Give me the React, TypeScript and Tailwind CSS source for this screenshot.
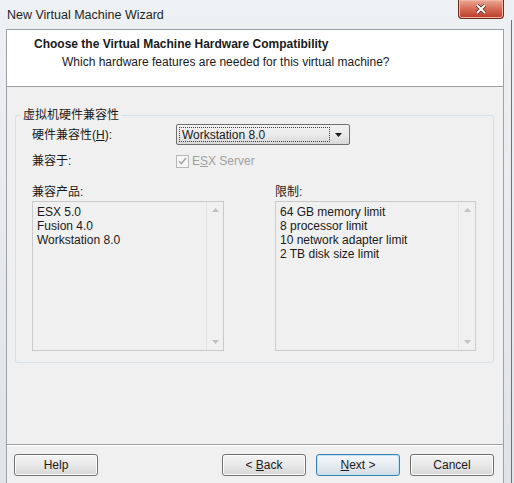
const PRODUCTS = ["ESX 5.0", "Fusion 4.0", "Workstation 8.0"];

const LIMITS = [
  "64 GB memory limit",
  "8 processor limit",
  "10 network adapter limit",
  "2 TB disk size limit",
];

function ListBox({ items, width }: { items: string[]; width: string }) {
  return (
    <div className={`flex h-[150px] border border-[#cacaca] bg-[#f0f0f0] ${width}`}>
      <div className="flex-1 px-[4px] pt-[3px] leading-[14px] text-[#1a1a1a]">
        {items.map((item) => (
          <div key={item}>{item}</div>
        ))}
      </div>
      <div className="flex w-[17px] flex-col items-center justify-between border-l border-[#e4e4e4] py-[6px]">
        <svg viewBox="0 0 7 4" className="h-[4px] w-[7px]">
          <path d="M0 4 3.5 0 7 4Z" fill="#c2c2c2" />
        </svg>
        <svg viewBox="0 0 7 4" className="h-[4px] w-[7px]">
          <path d="M0 0 3.5 4 7 0Z" fill="#c2c2c2" />
        </svg>
      </div>
    </div>
  );
}

function Button({
  children,
  focused = false,
}: {
  children: React.ReactNode;
  focused?: boolean;
}) {
  return (
    <button
      className={`h-[22px] w-[84px] rounded-[3px] border text-[12px] text-[#1a1a1a] ${
        focused
          ? "border-[#3c7fb1] bg-gradient-to-b from-[#f4f8fb] via-[#e6edf2] to-[#d4dde4] shadow-[inset_0_0_0_1px_#bfe3f7]"
          : "border-[#707070] bg-gradient-to-b from-[#f4f4f4] via-[#e8e8e8] to-[#d6d6d6] shadow-[inset_0_0_0_1px_#fcfcfc]"
      }`}
    >
      {children}
    </button>
  );
}

export default function App() {
  return (
    <div className="relative h-[483px] w-[514px] overflow-hidden bg-gradient-to-b from-[#eef1f4] to-[#dfe4e9] font-['Liberation_Sans','Noto_Sans_CJK_SC',sans-serif] text-[12px]">
      {/* title bar */}
      <div className="flex h-[29px] items-center pl-[7px] pt-[2px] text-[12.5px] text-[#1e1e1e]">
        New Virtual Machine Wizard
      </div>
      <div className="absolute right-[10px] top-0 flex h-[19px] w-[46px] items-center justify-center rounded-b-[4px] border border-t-0 border-[#6b2b1f] bg-gradient-to-b from-[#e9a997] via-[#d56b55] to-[#b83a27] shadow-[inset_0_0_0_1px_#f1b5a5]">
        <svg viewBox="0 0 12 10" className="h-[10px] w-[12px]">
          <path
            d="M2 1 6 5 10 1M2 9 6 5 10 9"
            stroke="#4a2018"
            strokeWidth={3.4}
            fill="none"
          />
          <path
            d="M2 1 6 5 10 1M2 9 6 5 10 9"
            stroke="#ffffff"
            strokeWidth={2}
            fill="none"
          />
        </svg>
      </div>
      <div className="absolute right-[2px] top-[20px] bottom-0 w-px bg-[#6f7378]" />

      {/* client area */}
      <div className="ml-[6px] h-[460px] w-[498px] border border-[#9aa1a8] bg-[#f0f0f0]">
        <div className="h-[57px] border-b border-[#a0a0a0] bg-white pl-[27px] pt-[6px]">
          <div className="font-bold leading-[16px] text-[#1a1a1a]">
            Choose the Virtual Machine Hardware Compatibility
          </div>
          <div className="mt-[2px] pl-[28px] leading-[16px] text-[#1a1a1a]">
            Which hardware features are needed for this virtual machine?
          </div>
        </div>

        <fieldset className="ml-[8px] mt-[20px] h-[256px] w-[479px] rounded-[3px] border border-[#d5dfe5] pl-[16px] pt-[1px]">
          <legend className="-ml-[11px] px-[2px] leading-[16px] text-[#1a1a1a]">
            虚拟机硬件兼容性
          </legend>
          <div className="flex items-center">
            <div className="w-[144px] text-[#1a1a1a]">
              硬件兼容性(<span className="underline">H</span>):
            </div>
            <div className="flex h-[21px] w-[174px] items-center rounded-[2px] border border-[#707070] bg-gradient-to-b from-[#f2f2f2] via-[#ebebeb] to-[#d8d8d8] p-[2px]">
              <div className="flex h-full flex-1 items-center border border-dotted border-[#404040] pl-[2px] text-[#1a1a1a]">
                Workstation 8.0
              </div>
              <svg viewBox="0 0 7 4" className="mx-[5px] h-[4px] w-[7px]">
                <path d="M0 0 3.5 4 7 0Z" fill="#1a1a1a" />
              </svg>
            </div>
          </div>
          <div className="mt-[7px] flex items-center">
            <div className="w-[144px] text-[#1a1a1a]">兼容于:</div>
            <div className="flex h-[13px] w-[13px] items-center justify-center border border-[#b8b8b8] bg-[#f6f6f6]">
              <svg viewBox="0 0 9 8" className="h-[8px] w-[9px]">
                <path
                  d="M1 4.2 3.4 6.6 8 1"
                  stroke="#a8a8a8"
                  strokeWidth={1.6}
                  fill="none"
                />
              </svg>
            </div>
            <div className="ml-[3px] text-[#a0a0a0]">
              E<span className="underline">S</span>X Server
            </div>
          </div>
          <div className="mt-[14px] flex">
            <div className="w-[243px]">
              <div className="leading-[16px] text-[#1a1a1a]">兼容产品:</div>
              <div className="mt-[1px]">
                <ListBox items={PRODUCTS} width="w-[192px]" />
              </div>
            </div>
            <div>
              <div className="leading-[16px] text-[#1a1a1a]">限制:</div>
              <div className="mt-[1px]">
                <ListBox items={LIMITS} width="w-[201px]" />
              </div>
            </div>
          </div>
        </fieldset>

        <div className="mt-[81px] border-t border-[#a0a0a0] shadow-[0_1px_0_#ffffff]" />
        <div className="flex pl-[7px] pr-[9px] pt-[9px]">
          <Button>Help</Button>
          <div className="ml-auto flex gap-[10px]">
            <Button>
              &lt; <span className="underline">B</span>ack
            </Button>
            <Button focused>
              <span className="underline">N</span>ext &gt;
            </Button>
            <Button>Cancel</Button>
          </div>
        </div>
      </div>
    </div>
  );
}
